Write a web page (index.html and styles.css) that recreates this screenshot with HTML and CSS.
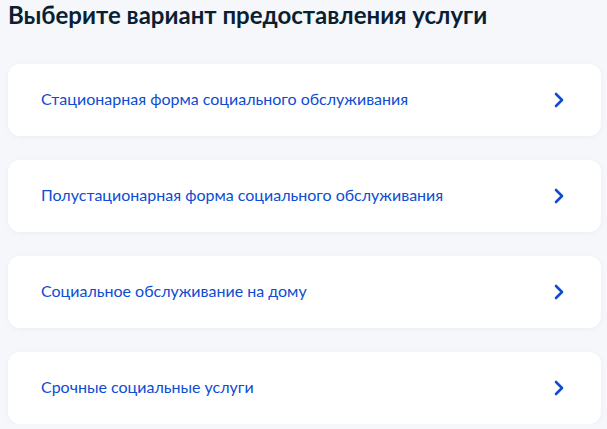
FILE: index.html
```html
<!DOCTYPE html>
<html lang="ru">
<head>
<meta charset="utf-8">
<link rel="stylesheet" href="styles.css">
</head>
<body>
<main class="page">
  <h1 class="title">Выберите вариант предоставления услуги</h1>
  <ul class="options">
    <li class="option"><span class="option-text">Стационарная форма социального обслуживания</span><svg class="chev" viewBox="0 0 12 16" width="12" height="16"><path d="M3 2l6 6-6 6" fill="none" stroke="#0d4cd3" stroke-width="2.6" stroke-linecap="round" stroke-linejoin="round"/></svg></li>
    <li class="option"><span class="option-text">Полустационарная форма социального обслуживания</span><svg class="chev" viewBox="0 0 12 16" width="12" height="16"><path d="M3 2l6 6-6 6" fill="none" stroke="#0d4cd3" stroke-width="2.6" stroke-linecap="round" stroke-linejoin="round"/></svg></li>
    <li class="option"><span class="option-text">Социальное обслуживание на дому</span><svg class="chev" viewBox="0 0 12 16" width="12" height="16"><path d="M3 2l6 6-6 6" fill="none" stroke="#0d4cd3" stroke-width="2.6" stroke-linecap="round" stroke-linejoin="round"/></svg></li>
    <li class="option"><span class="option-text">Срочные социальные услуги</span><svg class="chev" viewBox="0 0 12 16" width="12" height="16"><path d="M3 2l6 6-6 6" fill="none" stroke="#0d4cd3" stroke-width="2.6" stroke-linecap="round" stroke-linejoin="round"/></svg></li>
  </ul>
</main>
</body>
</html>
```
FILE: styles.css
```css
html, body {
  margin: 0;
  padding: 0;
  background: #f5f7fb;
}
body {
  font-family: Lato, "Noto Sans", sans-serif;
  color: #0b1f33;
}
.page {
  padding: 1px 6px 0 8px;
}
.title {
  margin: 0;
  font-size: 24px;
  font-weight: 700;
  line-height: 28px;
  color: #0b1f33;
}
.options {
  list-style: none;
  margin: 35px 0 0 0;
  padding: 0;
  display: flex;
  flex-direction: column;
  gap: 24px;
}
.option {
  height: 72px;
  box-sizing: border-box;
  background: #ffffff;
  border-radius: 12px;
  box-shadow: 0 1px 4px rgba(230, 235, 245, 0.8);
  display: flex;
  align-items: center;
  justify-content: space-between;
  padding: 0 36px 0 33px;
}
.option-text {
  font-size: 16px;
  line-height: 20px;
  padding-bottom: 2px;
  color: #0d4cd3;
}
.chev {
  display: block;
}
```
